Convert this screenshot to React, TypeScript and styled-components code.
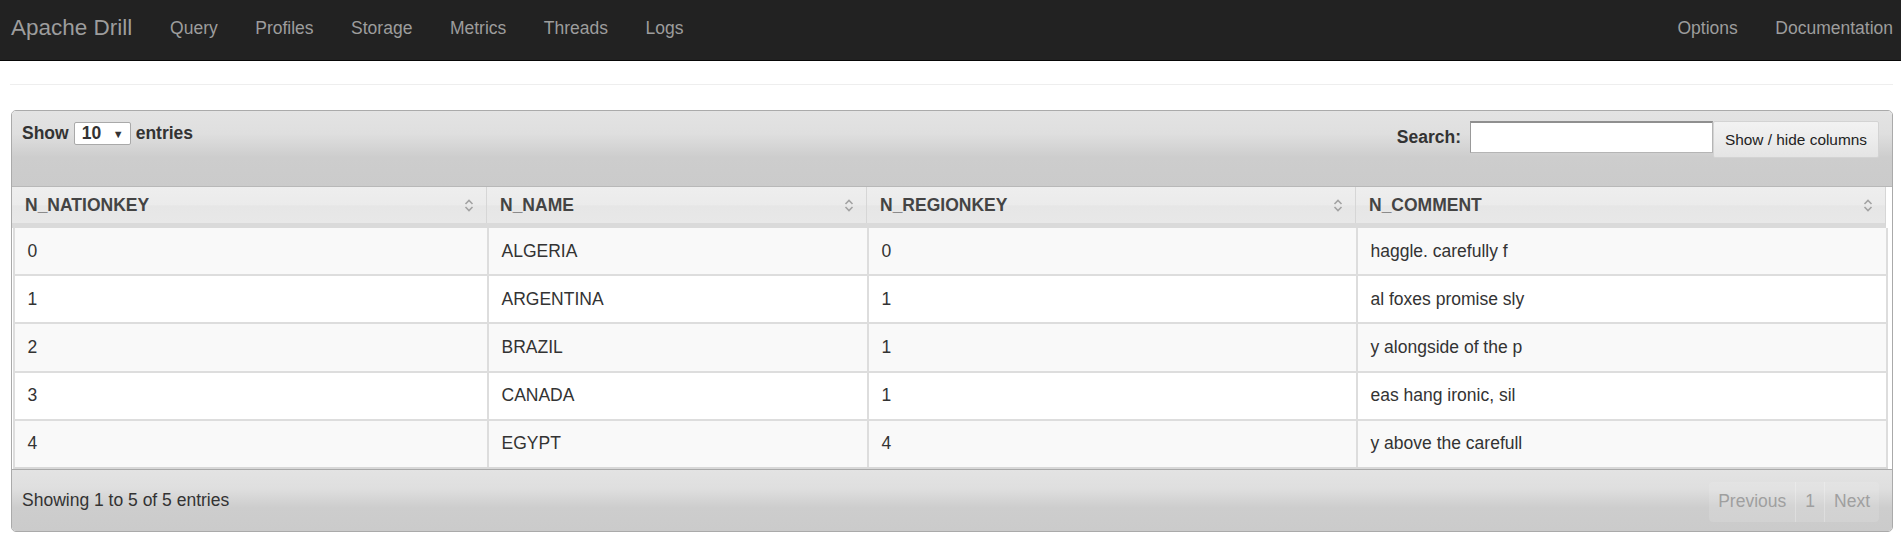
import React from "react";
import styled, { createGlobalStyle } from "styled-components";

const GlobalStyle = createGlobalStyle`
	body {
		margin: 0;
		background: #fff;
		color: #333;
		font-family: "Liberation Sans", Arial, Helvetica, sans-serif;
		font-size: 17.5px;
	}
	* {
		box-sizing: border-box;
	}
`;

const rows = [
	["0", "ALGERIA", "0", "haggle. carefully f"],
	["1", "ARGENTINA", "1", "al foxes promise sly"],
	["2", "BRAZIL", "1", "y alongside of the p"],
	["3", "CANADA", "1", "eas hang ironic, sil"],
	["4", "EGYPT", "4", "y above the carefull"],
];

const columns = ["N_NATIONKEY", "N_NAME", "N_REGIONKEY", "N_COMMENT"];

const SortIcon = () => (
	<svg width='10' height='15' viewBox='0 0 10 15' fill='none'>
		<path d='M1.5 6 L5 2.5 L8.5 6' stroke='#a3a3a3' strokeWidth='1.6' />
		<path d='M1.5 9 L5 12.5 L8.5 9' stroke='#a3a3a3' strokeWidth='1.6' />
	</svg>
);

const App = () => {
	return (
		<>
			<GlobalStyle />
			<Navbar>
				<Brand>Apache Drill</Brand>
				<NavLeft>
					<NavLink>Query</NavLink>
					<NavLink>Profiles</NavLink>
					<NavLink>Storage</NavLink>
					<NavLink>Metrics</NavLink>
					<NavLink>Threads</NavLink>
					<NavLink>Logs</NavLink>
				</NavLeft>
				<NavRight>
					<NavLink>Options</NavLink>
					<NavLink>Documentation</NavLink>
				</NavRight>
			</Navbar>
			<Main>
				<Rule />
				<Panel>
					<Toolbar>
						<LengthControl>
							Show
							<SelectBox>
								<span>10</span>
								<Caret>▼</Caret>
							</SelectBox>
							entries
						</LengthControl>
						<SearchControl>
							<SearchLabel>Search:</SearchLabel>
							<SearchInput type='text' />
							<ColumnsButton>Show / hide columns</ColumnsButton>
						</SearchControl>
					</Toolbar>
					<HeadRow>
						{columns.map((c) => (
							<HeadCell key={c}>
								<span>{c}</span>
								<SortIcon />
							</HeadCell>
						))}
					</HeadRow>
					<Body>
						{rows.map((r, i) => (
							<BodyRow key={r[0]} $odd={i % 2 === 0}>
								{r.map((v, j) => (
									<BodyCell key={j}>{v}</BodyCell>
								))}
							</BodyRow>
						))}
					</Body>
					<Footer>
						<Info>Showing 1 to 5 of 5 entries</Info>
						<Pager>
							<PageButton>Previous</PageButton>
							<PageButton>1</PageButton>
							<PageButton>Next</PageButton>
						</Pager>
					</Footer>
				</Panel>
			</Main>
		</>
	);
};

const Navbar = styled.nav`
	display: flex;
	align-items: flex-start;
	height: 61px;
	padding: 0 8px 0 11px;
	background: #222;
	border-bottom: 1px solid #080808;
	overflow: hidden;
`;

const Brand = styled.a`
	color: #9d9d9d;
	font-size: 22.5px;
	line-height: 25px;
	padding-top: 15px;
	margin-right: 19px;
`;

const NavLeft = styled.div`
	display: flex;
	flex: 1;
`;

const NavRight = styled.div`
	display: flex;
	a:last-child {
		padding-right: 0;
	}
`;

const NavLink = styled.a`
	color: #9d9d9d;
	font-size: 17.5px;
	line-height: 25px;
	padding: 16px 18.75px 0;
`;

const Main = styled.main`
	padding: 0 8px 0 10px;
`;

const Rule = styled.hr`
	margin: 23px 0 25px;
	border: 0;
	border-top: 1px solid #eee;
`;

const Panel = styled.section`
	margin-left: 1px;
	border: 1px solid #aaa;
	border-radius: 5px;
	overflow: hidden;
	background: #fff;
`;

const barGradient = `linear-gradient(to bottom, #e3e3e3 0%, #dfdfdf 30%, #cdcdcd 62%, #cbcbcb 100%)`;

const Toolbar = styled.div`
	display: flex;
	justify-content: space-between;
	align-items: flex-start;
	height: 76px;
	padding: 10px 13px 0 10px;
	background: ${barGradient};
	border-bottom: 1px solid #b8b8b8;
`;

const LengthControl = styled.label`
	display: flex;
	align-items: center;
	gap: 5px;
	font-weight: bold;
	color: #333;
	margin-top: 1px;
`;

const SelectBox = styled.span`
	display: flex;
	align-items: center;
	justify-content: space-between;
	width: 57px;
	height: 23px;
	padding: 0 6px 0 7px;
	background: #fff;
	border: 1px solid #a9a9a9;
	border-radius: 2px;
	font-weight: bold;
`;

const Caret = styled.span`
	font-size: 11px;
	color: #333;
`;

const SearchControl = styled.div`
	display: flex;
	align-items: flex-start;
`;

const SearchLabel = styled.label`
	font-weight: bold;
	line-height: 32px;
	margin-right: 9px;
`;

const SearchInput = styled.input`
	width: 243px;
	height: 32px;
	margin: 0;
	border: 1px solid #b5b5b5;
	border-top: 2px solid #8f8f8f;
	border-left-color: #999;
	background: #fff;
	font: inherit;
`;

const ColumnsButton = styled.button`
	width: 166px;
	height: 37px;
	margin: 0;
	padding: 0;
	border: 1px solid #d3d3d3;
	border-radius: 2px;
	background: linear-gradient(to bottom, #f2f2f2 0%, #ececec 50%, #e4e4e4 100%);
	color: #222;
	font-family: "Liberation Sans", Arial, sans-serif;
	font-size: 15.4px;
`;

const HeadRow = styled.div`
	display: grid;
	grid-template-columns: 475px 380px 489px 1fr;
	height: 41px;
	margin-right: 6px;
	background: linear-gradient(to bottom, #eeeeee 0%, #ebebeb 50%, #e6e6e6 52%, #e8e8e8 100%);
	border-bottom: 5px solid #dadada;
	border-right: 1px solid #d6d6d6;
`;

const HeadCell = styled.div`
	display: flex;
	align-items: center;
	justify-content: space-between;
	padding: 0 12px 0 13px;
	border-right: 1px solid #d6d6d6;
	font-weight: bold;
	color: #444;
	&:last-child {
		border-right: 0;
	}
`;

const Body = styled.div`
	margin: 0 4px 0 1px;
`;

const BodyRow = styled.div<{ $odd: boolean }>`
	display: grid;
	grid-template-columns: 474px 380px 489px 1fr;
	height: 48.2px;
	background: ${(p) => (p.$odd ? "#f9f9f9" : "#fff")};
	border-left: 2px solid #ddd;
	border-bottom: 2px solid #ddd;
	&:last-child {
		border-bottom: 2px solid #d8d8d8;
	}
`;

const BodyCell = styled.div`
	display: flex;
	align-items: center;
	padding: 0 12.5px;
	border-right: 2px solid #ddd;
	color: #333;
`;

const Footer = styled.div`
	display: flex;
	justify-content: space-between;
	align-items: center;
	height: 62px;
	padding: 0 13px 0 10px;
	background: ${barGradient};
	border-top: 1px solid #aaa;
`;

const Info = styled.div`
	color: #333;
`;

const Pager = styled.div`
	display: flex;
	height: 40px;
	margin-top: 3px;
	border-radius: 4px;
	overflow: hidden;
	background: rgba(255, 255, 255, 0.12);
`;

const PageButton = styled.span`
	display: flex;
	align-items: center;
	padding: 0 9px;
	color: #9f9f9f;
	border-left: 1px solid rgba(255, 255, 255, 0.25);
	&:first-child {
		border-left: 0;
	}
`;

export default App;
